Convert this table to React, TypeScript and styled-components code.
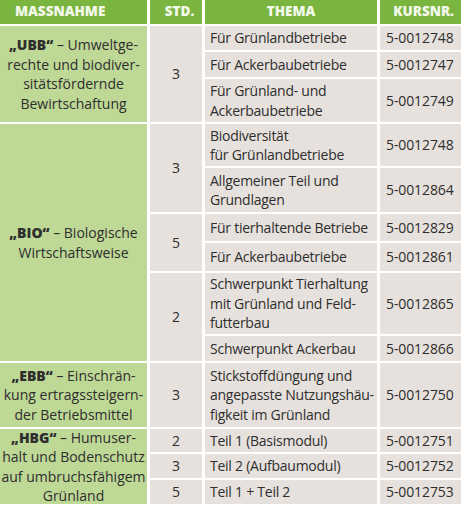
import React from 'react'
import styled, { createGlobalStyle } from 'styled-components'

const GlobalStyle = createGlobalStyle`
  body {
    margin: 0;
    background: #ffffff;
    font-family: "Open Sans", Lato, sans-serif;
  }
`

const Table = styled.div`
  display: grid;
  width: 461px;
  grid-template-columns: 147px 52px 172px 81px;
  grid-template-rows: 24px 24px 25px 43px 42px 44px 27px 28px 61px 25px 64px 23px 24px 24px;
  column-gap: 3px;
  row-gap: 2px;
  color: #2e2e2e;
  font-size: 14px;
  line-height: 19.5px;
`

const HeadCell = styled.div<{ $align: string; $pad: string }>`
  background: #7ab53f;
  color: #f3f9ea;
  font-weight: 800;
  font-size: 13.5px;
  text-transform: uppercase;
  display: flex;
  align-items: center;
  justify-content: ${(p) => p.$align};
  padding: ${(p) => p.$pad};
`

const MeasureCell = styled.div<{ $span: number }>`
  grid-column: 1;
  grid-row: span ${(p) => p.$span};
  background: #bed896;
  display: flex;
  align-items: center;
  justify-content: center;
  text-align: center;
  white-space: nowrap;
  b {
    font-weight: 800;
  }
`

const HoursCell = styled.div<{ $span: number }>`
  grid-column: 2;
  grid-row: span ${(p) => p.$span};
  background: #e6e1dd;
  display: flex;
  align-items: center;
  justify-content: center;
`

const TopicCell = styled.div`
  grid-column: 3;
  background: #e6e1dd;
  display: flex;
  align-items: center;
  padding-left: 5px;
  white-space: nowrap;
  letter-spacing: -0.25px;
`

const CourseCell = styled.div`
  grid-column: 4;
  background: #e6e1dd;
  display: flex;
  align-items: center;
  padding-left: 6px;
  letter-spacing: -0.1px;
`

interface ITopic {
  lines: string[]
  nr: string
}
interface IHours {
  std: number
  topics: ITopic[]
}
interface IGroup {
  tag: string
  lines: string[]
  hours: IHours[]
}

const groups: IGroup[] = [
  {
    tag: '„UBB“',
    lines: [' – Umweltge-', 'rechte und biodiver-', 'sitätsfördernde', 'Bewirtschaftung'],
    hours: [
      {
        std: 3,
        topics: [
          { lines: ['Für Grünlandbetriebe'], nr: '5-0012748' },
          { lines: ['Für Ackerbaubetriebe'], nr: '5-0012747' },
          { lines: ['Für Grünland- und', 'Ackerbaubetriebe'], nr: '5-0012749' },
        ],
      },
    ],
  },
  {
    tag: '„BIO“',
    lines: [' – Biologische', 'Wirtschaftsweise'],
    hours: [
      {
        std: 3,
        topics: [
          { lines: ['Biodiversität', 'für Grünlandbetriebe'], nr: '5-0012748' },
          { lines: ['Allgemeiner Teil und', 'Grundlagen'], nr: '5-0012864' },
        ],
      },
      {
        std: 5,
        topics: [
          { lines: ['Für tierhaltende Betriebe'], nr: '5-0012829' },
          { lines: ['Für Ackerbaubetriebe'], nr: '5-0012861' },
        ],
      },
      {
        std: 2,
        topics: [
          { lines: ['Schwerpunkt Tierhaltung', 'mit Grünland und Feld-', 'futterbau'], nr: '5-0012865' },
          { lines: ['Schwerpunkt Ackerbau'], nr: '5-0012866' },
        ],
      },
    ],
  },
  {
    tag: '„EBB“',
    lines: [' – Einschrän-', 'kung ertragssteigern-', 'der Betriebsmittel'],
    hours: [
      {
        std: 3,
        topics: [
          { lines: ['Stickstoffdüngung und', 'angepasste Nutzungshäu-', 'figkeit im Grünland'], nr: '5-0012750' },
        ],
      },
    ],
  },
  {
    tag: '„HBG“',
    lines: [' – Humuser-', 'halt und Bodenschutz', 'auf umbruchsfähigem', 'Grünland'],
    hours: [
      { std: 2, topics: [{ lines: ['Teil 1 (Basismodul)'], nr: '5-0012751' }] },
      { std: 3, topics: [{ lines: ['Teil 2 (Aufbaumodul)'], nr: '5-0012752' }] },
      { std: 5, topics: [{ lines: ['Teil 1 + Teil 2'], nr: '5-0012753' }] },
    ],
  },
]

const Lines = ({ lines }: { lines: string[] }) => (
  <span>
    {lines.map((l, i) => (
      <React.Fragment key={i}>
        {i > 0 && <br />}
        {l}
      </React.Fragment>
    ))}
  </span>
)

const App = () => {
  return (
    <>
      <GlobalStyle />
      <Table>
        <HeadCell $align="flex-start" $pad="0 0 0 15px">Massnahme</HeadCell>
        <HeadCell $align="center" $pad="0 0 0 7px">Std.</HeadCell>
        <HeadCell $align="center" $pad="0">Thema</HeadCell>
        <HeadCell $align="flex-end" $pad="0 7px 0 0">Kursnr.</HeadCell>

        {groups.map((g) => {
          const total = g.hours.reduce((n, h) => n + h.topics.length, 0)
          return (
            <React.Fragment key={g.tag}>
              <MeasureCell $span={total}>
                <span>
                  <b>{g.tag}</b>
                  {g.lines[0]}
                  {g.lines.slice(1).map((l, i) => (
                    <React.Fragment key={i}>
                      <br />
                      {l}
                    </React.Fragment>
                  ))}
                </span>
              </MeasureCell>
              {g.hours.map((h, hi) => (
                <React.Fragment key={hi}>
                  <HoursCell $span={h.topics.length}>{h.std}</HoursCell>
                  {h.topics.map((t, ti) => (
                    <React.Fragment key={ti}>
                      <TopicCell>
                        <Lines lines={t.lines} />
                      </TopicCell>
                      <CourseCell>{t.nr}</CourseCell>
                    </React.Fragment>
                  ))}
                </React.Fragment>
              ))}
            </React.Fragment>
          )
        })}
      </Table>
    </>
  )
}

export default App
